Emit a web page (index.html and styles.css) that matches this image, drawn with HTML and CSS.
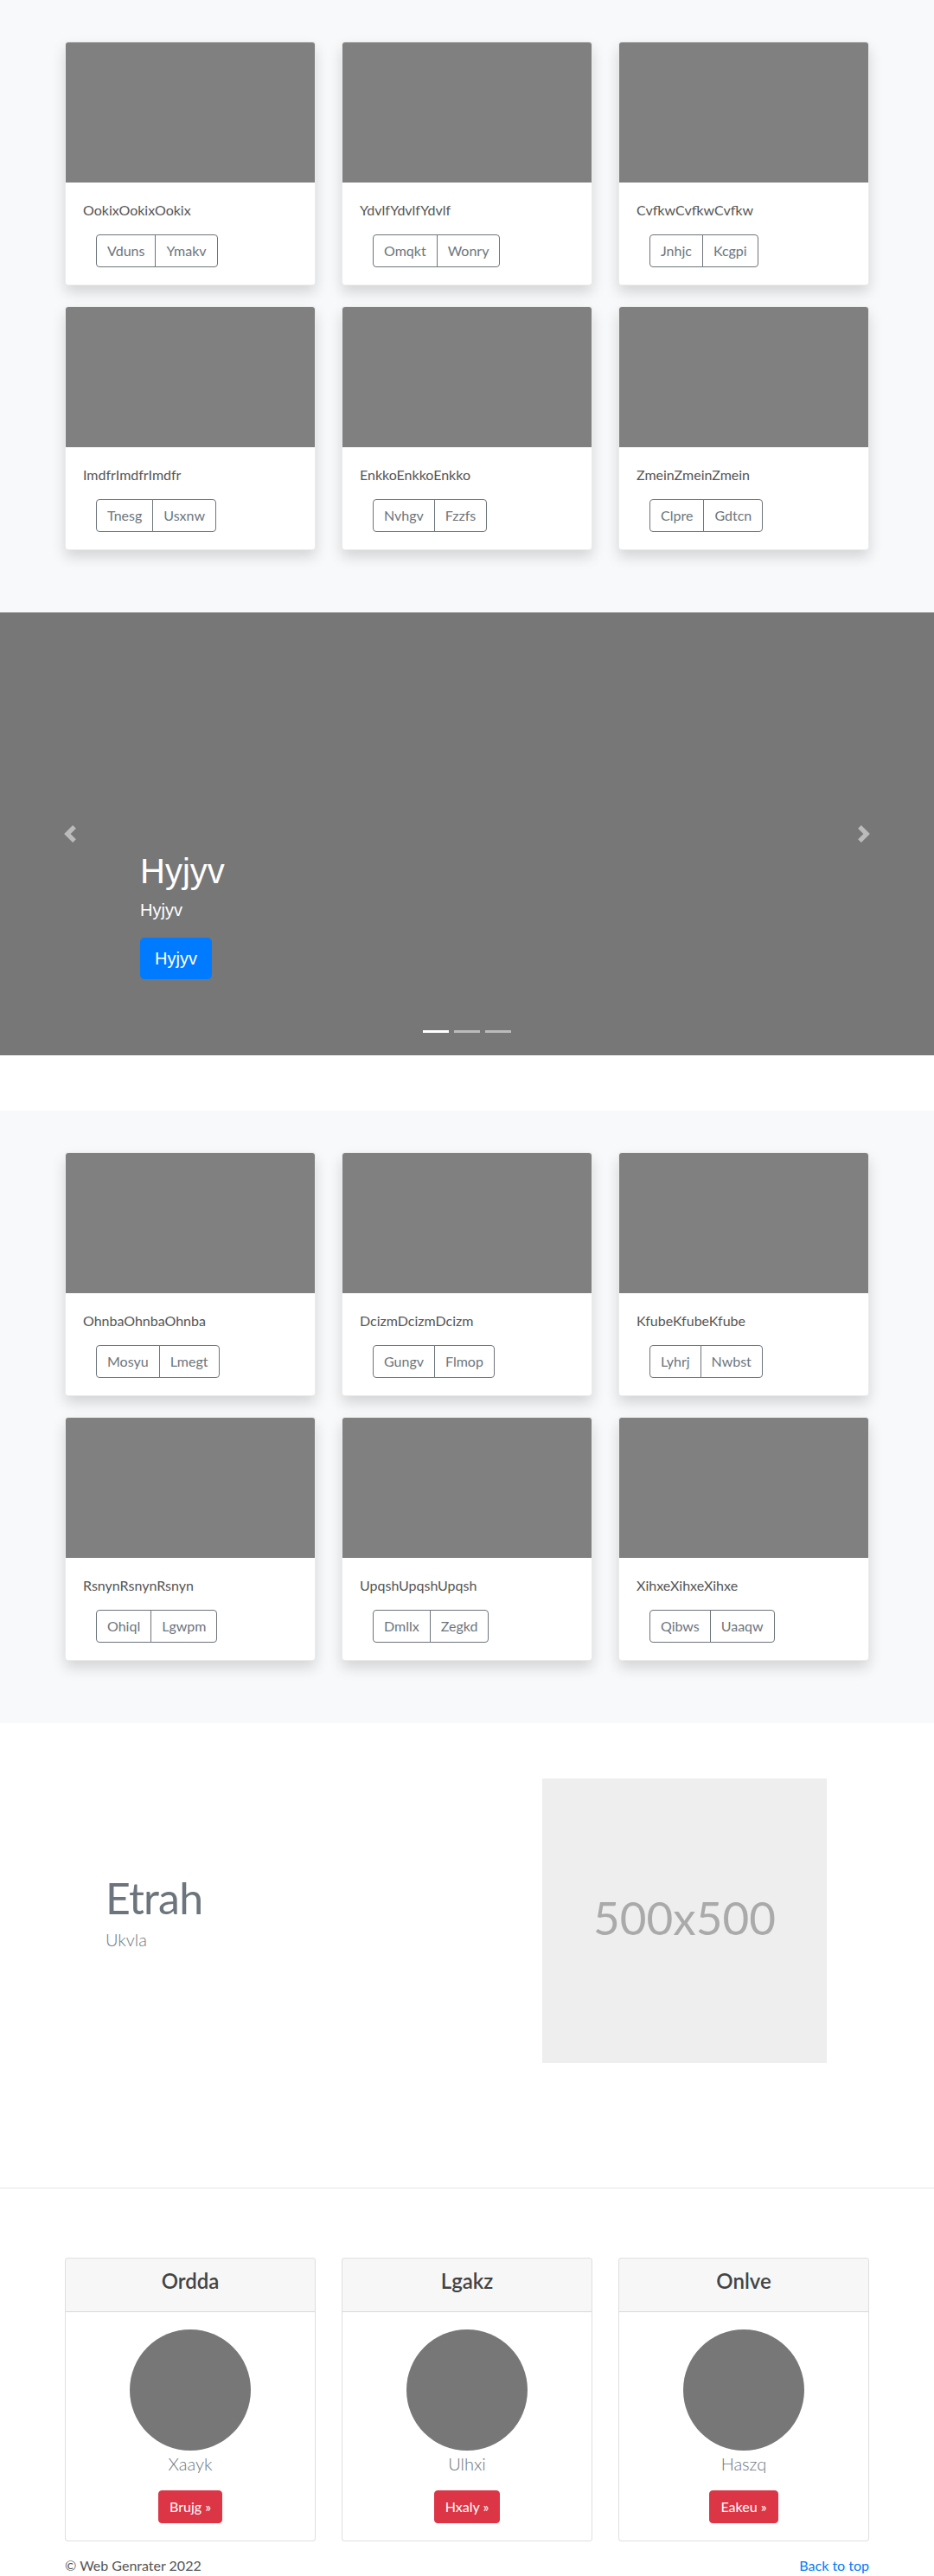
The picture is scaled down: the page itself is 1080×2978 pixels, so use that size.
FILE: index.html
```html
<!DOCTYPE html>
<html lang="en">
<head>
<meta charset="utf-8">
<title>Web Genrater</title>
<link rel="stylesheet" href="styles.css">
</head>
<body>
<main>
  <section class="album">
    <div class="container">
      <div class="card-grid">
        <div class="card"><div class="card-img"></div><div class="card-body"><p class="card-text">OokixOokixOokix</p><div class="btn-group"><span class="btn-outline">Vduns</span><span class="btn-outline">Ymakv</span></div></div></div>
        <div class="card"><div class="card-img"></div><div class="card-body"><p class="card-text">YdvlfYdvlfYdvlf</p><div class="btn-group"><span class="btn-outline">Omqkt</span><span class="btn-outline">Wonry</span></div></div></div>
        <div class="card"><div class="card-img"></div><div class="card-body"><p class="card-text">CvfkwCvfkwCvfkw</p><div class="btn-group"><span class="btn-outline">Jnhjc</span><span class="btn-outline">Kcgpi</span></div></div></div>
        <div class="card"><div class="card-img"></div><div class="card-body"><p class="card-text">ImdfrImdfrImdfr</p><div class="btn-group"><span class="btn-outline">Tnesg</span><span class="btn-outline">Usxnw</span></div></div></div>
        <div class="card"><div class="card-img"></div><div class="card-body"><p class="card-text">EnkkoEnkkoEnkko</p><div class="btn-group"><span class="btn-outline">Nvhgv</span><span class="btn-outline">Fzzfs</span></div></div></div>
        <div class="card"><div class="card-img"></div><div class="card-body"><p class="card-text">ZmeinZmeinZmein</p><div class="btn-group"><span class="btn-outline">Clpre</span><span class="btn-outline">Gdtcn</span></div></div></div>
      </div>
    </div>
  </section>

  <section class="carousel">
    <div class="carousel-caption">
      <h1 class="caption-title">Hyjyv</h1>
      <p class="caption-text">Hyjyv</p>
      <div class="caption-action"><span class="btn-primary-lg">Hyjyv</span></div>
    </div>
    <div class="carousel-control prev">
      <svg viewBox="0 0 8 8" fill="#fff"><path d="M5.25 0l-4 4 4 4 1.5-1.5L4.25 4l2.5-2.5L5.25 0z"/></svg>
    </div>
    <div class="carousel-control next">
      <svg viewBox="0 0 8 8" fill="#fff"><path d="M2.75 0l-1.5 1.5L3.75 4l-2.5 2.5L2.75 8l4-4-4-4z"/></svg>
    </div>
    <ol class="indicators">
      <li class="active"></li>
      <li></li>
      <li></li>
    </ol>
  </section>

  <section class="album">
    <div class="container">
      <div class="card-grid">
        <div class="card"><div class="card-img"></div><div class="card-body"><p class="card-text">OhnbaOhnbaOhnba</p><div class="btn-group"><span class="btn-outline">Mosyu</span><span class="btn-outline">Lmegt</span></div></div></div>
        <div class="card"><div class="card-img"></div><div class="card-body"><p class="card-text">DcizmDcizmDcizm</p><div class="btn-group"><span class="btn-outline">Gungv</span><span class="btn-outline">Flmop</span></div></div></div>
        <div class="card"><div class="card-img"></div><div class="card-body"><p class="card-text">KfubeKfubeKfube</p><div class="btn-group"><span class="btn-outline">Lyhrj</span><span class="btn-outline">Nwbst</span></div></div></div>
        <div class="card"><div class="card-img"></div><div class="card-body"><p class="card-text">RsnynRsnynRsnyn</p><div class="btn-group"><span class="btn-outline">Ohiql</span><span class="btn-outline">Lgwpm</span></div></div></div>
        <div class="card"><div class="card-img"></div><div class="card-body"><p class="card-text">UpqshUpqshUpqsh</p><div class="btn-group"><span class="btn-outline">Dmllx</span><span class="btn-outline">Zegkd</span></div></div></div>
        <div class="card"><div class="card-img"></div><div class="card-body"><p class="card-text">XihxeXihxeXihxe</p><div class="btn-group"><span class="btn-outline">Qibws</span><span class="btn-outline">Uaaqw</span></div></div></div>
      </div>
    </div>
  </section>

  <section class="featurette">
    <div class="container">
      <div class="featurette-row">
        <div class="featurette-text">
          <h2 class="featurette-heading">Etrah</h2>
          <p class="lead">Ukvla</p>
        </div>
        <div class="featurette-media">
          <div class="placeholder">500x500</div>
        </div>
      </div>
    </div>
  </section>

  <hr class="divider">

  <section class="pricing">
    <div class="container">
      <div class="pricing-grid">
        <div class="price-card">
          <div class="price-header"><h4>Ordda</h4></div>
          <div class="price-body"><div class="avatar"></div><p class="price-name">Xaayk</p><span class="btn-danger">Brujg &raquo;</span></div>
        </div>
        <div class="price-card">
          <div class="price-header"><h4>Lgakz</h4></div>
          <div class="price-body"><div class="avatar"></div><p class="price-name">Ulhxi</p><span class="btn-danger">Hxaly &raquo;</span></div>
        </div>
        <div class="price-card">
          <div class="price-header"><h4>Onlve</h4></div>
          <div class="price-body"><div class="avatar"></div><p class="price-name">Haszq</p><span class="btn-danger">Eakeu &raquo;</span></div>
        </div>
      </div>
    </div>
  </section>
</main>

<footer class="footer">
  <div class="container footer-row">
    <p>&copy; Web Genrater 2022</p>
    <a href="#" class="back-top">Back to top</a>
  </div>
</footer>
</body>
</html>
```

FILE: styles.css
```css
* {
  box-sizing: border-box;
}

body {
  margin: 0;
  font-family: Lato, "Open Sans", sans-serif;
  font-size: 16px;
  line-height: 1.5;
  color: #212529;
  background: #fff;
}

.container {
  width: 960px;
  margin: 0 auto;
  padding: 0 15px;
}

/* Album sections */
.album {
  background: #f8f9fa;
  padding: 48px 0;
}

.card-grid {
  display: grid;
  grid-template-columns: repeat(3, 290px);
  column-gap: 30px;
}

.card {
  background: #fff;
  border: 1px solid rgba(0, 0, 0, 0.08);
  border-radius: 4px;
  box-shadow: 0 8px 16px rgba(0, 0, 0, 0.15);
  margin-bottom: 24px;
  overflow: hidden;
}

.card-img {
  height: 162px;
  background: #808080;
}

.card-body {
  padding: 20px;
}

.card-text {
  margin: 0 0 16px;
  color: #555;
}

.btn-group {
  display: inline-flex;
  margin-left: 15px;
}

.btn-outline {
  display: block;
  padding: 6px 12px;
  border: 1px solid #6c757d;
  color: #6c757d;
  font-size: 16px;
  line-height: 24px;
}

.btn-outline:first-child {
  border-radius: 4px 0 0 4px;
}

.btn-outline:last-child {
  border-radius: 0 4px 4px 0;
  margin-left: -1px;
}

/* Carousel */
.carousel {
  position: relative;
  height: 512px;
  background: #777;
  margin-bottom: 64px;
  overflow: hidden;
}

.carousel-control {
  position: absolute;
  top: 0;
  bottom: 0;
  width: 15%;
  display: flex;
  align-items: center;
  justify-content: center;
  opacity: 0.5;
}

.carousel-control.prev {
  left: 0;
}

.carousel-control.next {
  right: 0;
}

.carousel-control svg {
  width: 20px;
  height: 20px;
  display: block;
}

.carousel-caption {
  position: absolute;
  left: 15%;
  right: 15%;
  bottom: 52px;
  padding: 20px 0;
  color: #fff;
  font-family: "Liberation Sans", Arial, sans-serif;
}

.caption-title {
  font-size: 40px;
  line-height: 48px;
  font-weight: 400;
  margin: 0 0 8px;
}

.caption-text {
  font-size: 20px;
  line-height: 27px;
  margin: 0 0 18px;
}

.caption-action {
  display: flex;
  margin: 0 0 16px;
}

.btn-primary-lg {
  display: block;
  background: #007bff;
  border: 1px solid #007bff;
  color: #fff;
  font-size: 20px;
  line-height: 30px;
  padding: 8px 16px;
  border-radius: 4.8px;
}

.indicators {
  position: absolute;
  left: 0;
  right: 0;
  bottom: 0;
  margin: 0 0 16px;
  padding: 0;
  list-style: none;
  display: flex;
  justify-content: center;
}

.indicators li {
  box-sizing: content-box;
  width: 30px;
  height: 3px;
  margin: 0 3px;
  background: #fff;
  background-clip: padding-box;
  border-top: 10px solid transparent;
  border-bottom: 10px solid transparent;
  opacity: 0.5;
}

.indicators li.active {
  opacity: 1;
}

/* Featurette */
.featurette {
  padding: 64px 0;
}

.featurette-row {
  display: grid;
  grid-template-columns: 1fr 1fr;
  column-gap: 30px;
  align-items: center;
}

.featurette-text {
  padding-left: 47px;
}

.featurette-heading {
  font-size: 50px;
  line-height: 1;
  letter-spacing: -0.8px;
  font-weight: 400;
  color: #6c757d;
  margin: 0 0 8px;
}

.lead {
  font-size: 20px;
  line-height: 30px;
  font-weight: 300;
  color: #6c757d;
  margin: 0 0 16px;
}

.featurette-media {
  display: flex;
  justify-content: flex-end;
  padding-right: 49px;
}

.placeholder {
  width: 329px;
  height: 329px;
  background: #eee;
  color: #aaa;
  display: flex;
  align-items: center;
  justify-content: center;
  font-size: 53px;
  padding-bottom: 8px;
}

.divider {
  border: 0;
  border-top: 1px solid rgba(0, 0, 0, 0.1);
  margin: 80px 0;
  height: 0;
}

/* Pricing */
.pricing-grid {
  display: grid;
  grid-template-columns: repeat(3, 290px);
  column-gap: 30px;
}

.price-card {
  background: #fff;
  border: 1px solid rgba(0, 0, 0, 0.125);
  border-radius: 4px;
  margin-bottom: 16px;
  text-align: center;
  overflow: hidden;
}

.price-header {
  background: rgba(0, 0, 0, 0.03);
  border-bottom: 1px solid rgba(0, 0, 0, 0.125);
  padding: 12px 20px;
}

.price-header h4 {
  margin: 0 0 8px;
  font-size: 24px;
  line-height: 28.8px;
  font-weight: 600;
  color: #444;
}

.price-body {
  padding: 20px;
  display: flex;
  flex-direction: column;
  align-items: center;
}

.avatar {
  width: 140px;
  height: 140px;
  border-radius: 50%;
  background: #777;
}

.price-name {
  font-size: 20px;
  line-height: 30px;
  font-weight: 300;
  color: #6c757d;
  margin: 0 0 16px;
}

.btn-danger {
  display: block;
  background: #dc3545;
  border: 1px solid #dc3545;
  color: #fff;
  padding: 6px 12px;
  font-size: 16px;
  line-height: 24px;
  border-radius: 4px;
}

/* Footer */
.footer {
  color: #555;
}

.footer-row {
  display: flex;
  justify-content: space-between;
}

.footer-row p {
  margin: 0 0 16px;
}

.back-top {
  color: #007bff;
  text-decoration: none;
}
```
